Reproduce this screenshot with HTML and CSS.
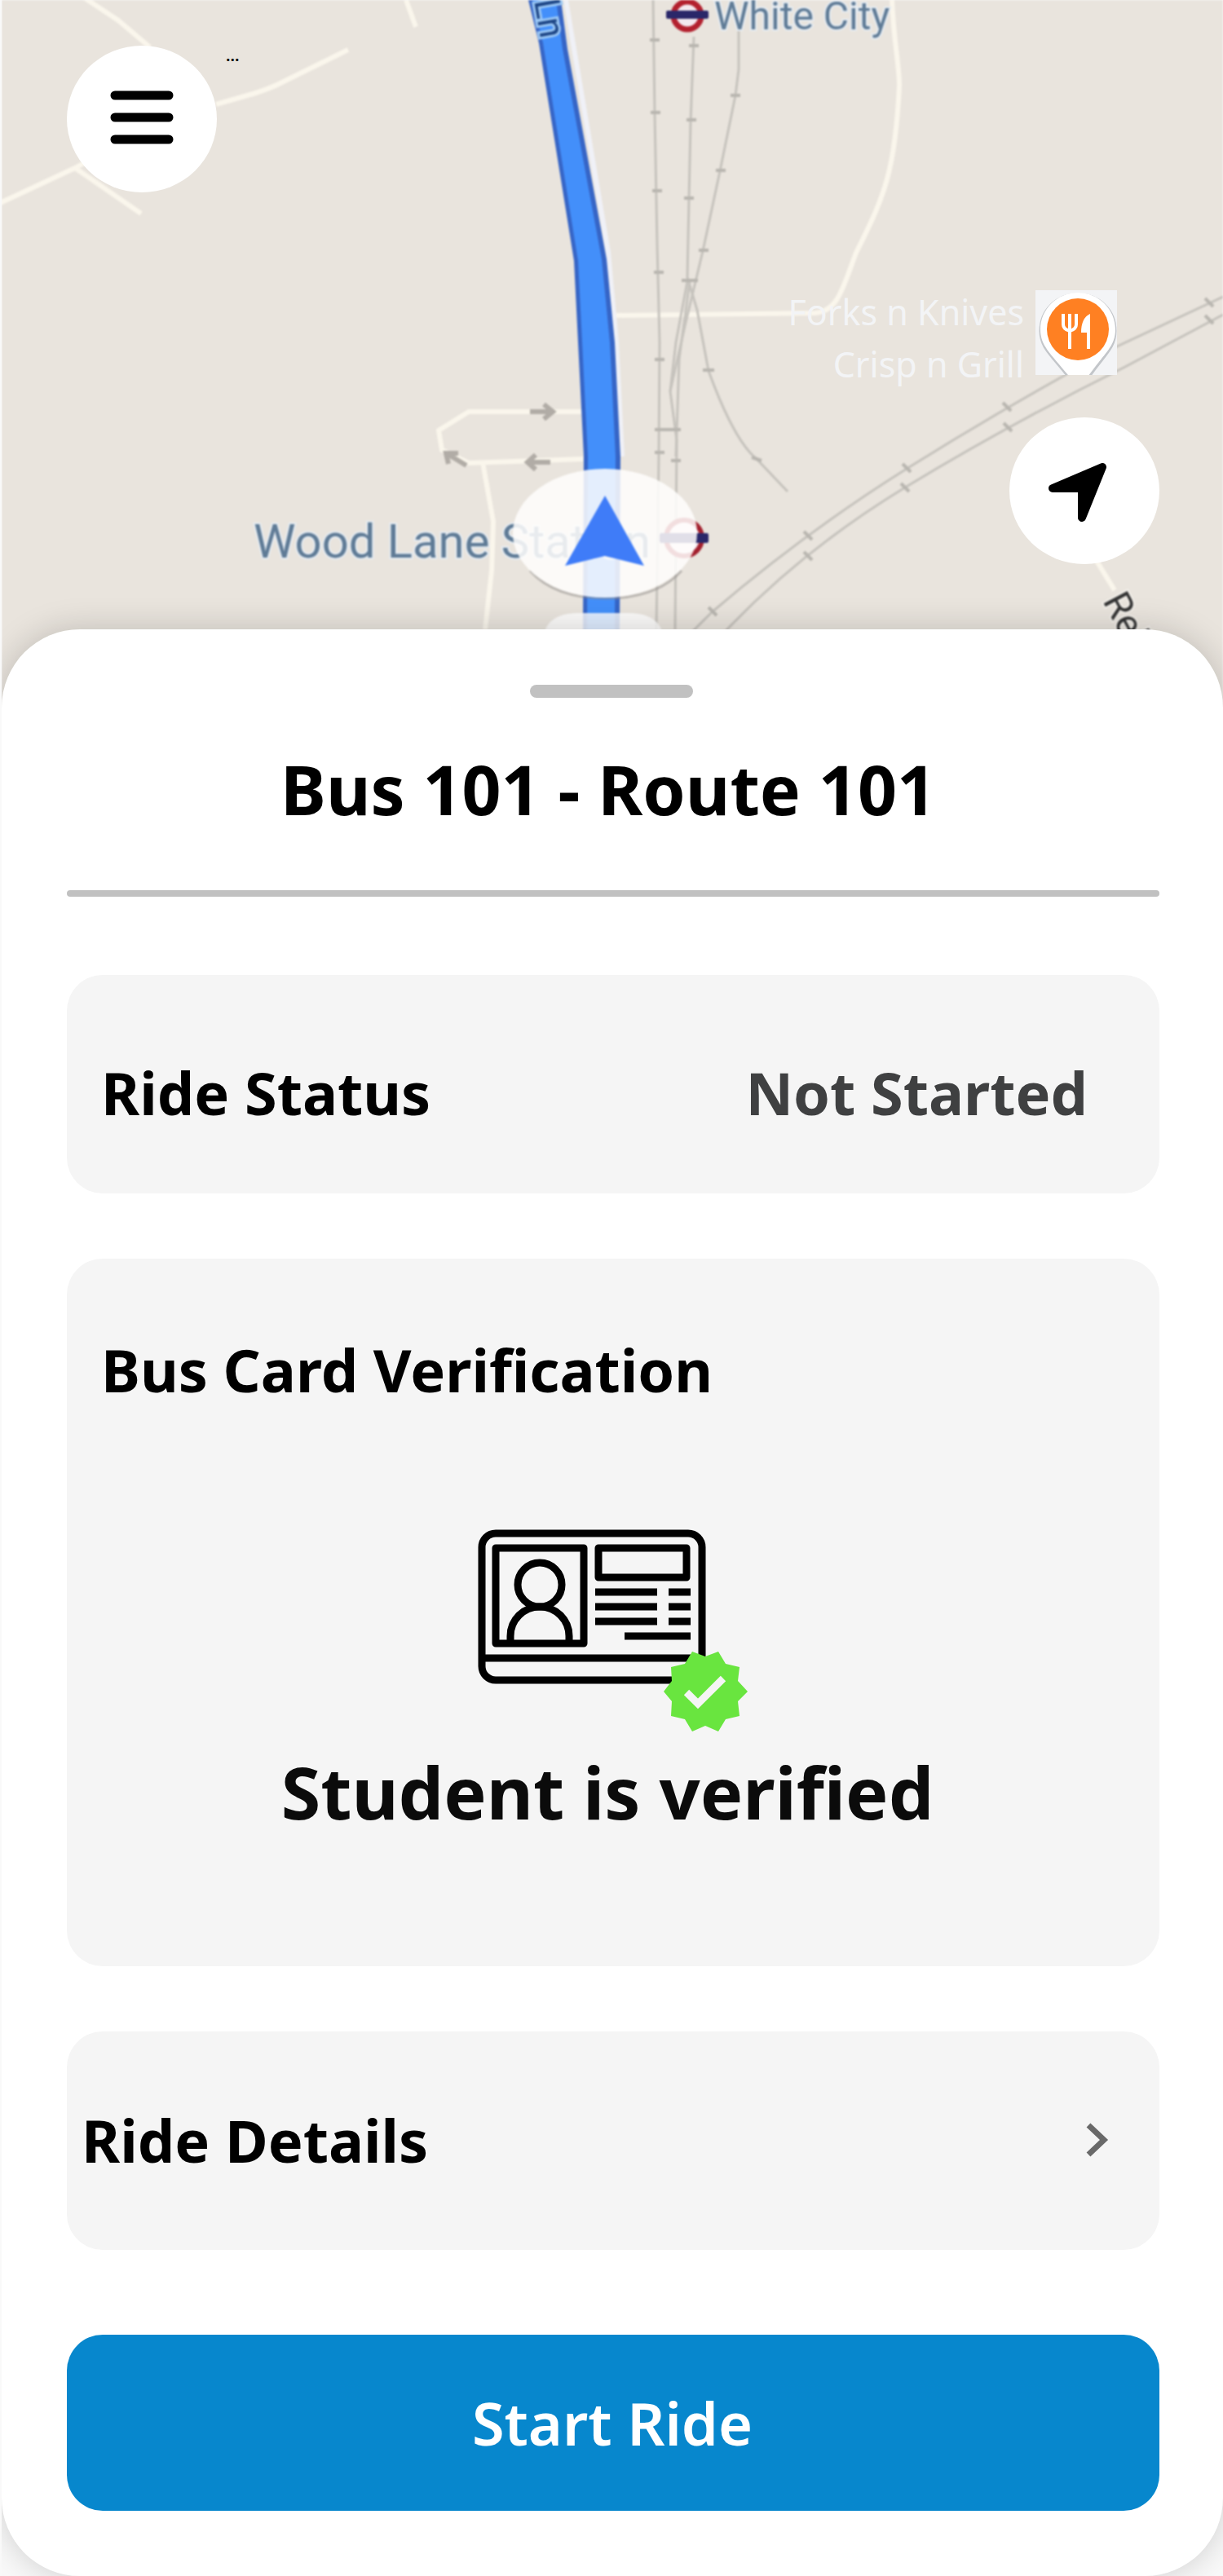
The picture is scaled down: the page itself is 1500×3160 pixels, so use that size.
FILE: index.html
```html
<!DOCTYPE html>
<html lang="en">
<head>
<meta charset="utf-8">
<meta name="viewport" content="width=device-width, initial-scale=1">
<title>Bus 101 - Route 101</title>
<link rel="stylesheet" href="styles.css">
</head>
<body>
<main class="app">
  <section class="map" aria-label="Map">
    <svg class="map-canvas" viewBox="2 0 1498 868" preserveAspectRatio="xMidYMin slice" aria-hidden="true">
      <rect width="1500" height="868" fill="#e9e4dd"/>
      <g fill="none" stroke="#faf6ec" stroke-width="6">
        <path d="M100-5L145 25L184 58M265 128L300 118Q330 110 350 99L427 61M0 249L92 206L110 196M92 206L173 262M498 0L510 33"/>
        <path d="M1094 0C1096 50 1103 80 1103 105C1098 210 1085 240 1050 310C1034 352 1028 382 1000 384L750 387"/>
        <path d="M715 505H575L538 528L542 552L575 568L715 563M592 567L605 640L603 700L595 772M1340 680L1367 724"/>
      </g>
      <g fill="none" stroke="#c6c3bd" stroke-width="3">
        <path d="M801 0L803 140L806 300L809 420L808 560L805 772"/>
        <path d="M851 45L847 150L843 340L855 380L869 455Q900 540 928 563L966 603"/>
        <path d="M906 35V85L902 117L883 210L862 308L840 400L822 480L830 540L828 772"/>
        <path d="M843 345L829 420L822 480M846 345L833 440L829 560"/>
        <path d="M1500 364L1370 425Q1235 498 1112 575T873 751L850 774"/>
        <path d="M1500 386L1380 450Q1235 522 1110 598T890 774"/>
      </g>
      <g fill="none" stroke="#b9b6b0" stroke-width="4">
        <path d="M797 49H809M798 138H810M800 234H812M802 334H814M845 56H857M842 147H854M839 243H851M836 344H856M896 117H908M878 209H890M857 307H869M803 441H815M803 527H835M803 555H815M823 565H835M862 454H876M922 561L934 565M1230 494L1240 504M1231 519L1241 529M1107 569L1117 579M1105 593L1115 603M986 652L996 662M986 677L996 687M869 745L879 755M1478 366L1488 376M1478 387L1488 397"/>
      </g>
      <g fill="none" stroke="#b1aca6" stroke-width="6">
        <path d="M650 505H676M667 496L678 505L667 514M675 567H648M657 558L647 567L657 576M572 571L549 557M562 556H547L550 569"/>
      </g>

      <path d="M694 0L704 60L746 310L756 420L763 560" fill="none" stroke="#f0f1f7" stroke-width="6"/>
      <path d="M648 0L661 53L704 320L709 420L716 560L715 774H760L761 560L754 420L744 318L696 60L688 0Z" fill="#3665c6"/>
      <path d="M653 0L666 53L709 320L714 420L721 560L720 774H754L755 560L748 420L738 318L690 60L682 0Z" fill="#438ffa"/>
      <g class="map-text">
        <text class="road-code" transform="translate(655 1) rotate(80)">Ln</text>
        <text class="station" x="876" y="36">White City</text>
        <text class="station station-lg" x="311" y="684">Wood Lane Station</text>
        <text class="street" transform="translate(1352 737) rotate(62)">Rel</text>
      </g>
      <circle cx="843" cy="19" r="17" fill="#f3e8ee" stroke="#b3202e" stroke-width="7"/>
      <rect x="817" y="13" width="52" height="10" rx="2" fill="#2a2769"/>
      <circle cx="839" cy="660" r="22" fill="#f3e8ee" stroke="#a3202e" stroke-width="6"/>
      <rect x="809" y="654" width="60" height="12" rx="2" fill="#2a2769"/>

      <path d="M650 700Q680 734 743 734T836 700" fill="none" stroke="#8d8a88" stroke-width="3" opacity=".5"/>
      <ellipse cx="742" cy="654" rx="113" ry="79" fill="#fffefd" opacity=".86"/>
      <path d="M742 608L790 694L742 682L693 694Z" fill="#3f7cf8"/>
      <path d="M668 774Q676 752 710 752H770Q804 752 812 774Z" fill="#fff" opacity=".82"/>
    </svg>

    <button class="round-btn menu-btn" type="button" aria-label="Menu">
      <svg width="78" height="66" viewBox="0 0 78 66"><path d="M6 6H72M6 33H72M6 60H72" stroke="#000" stroke-width="11" stroke-linecap="round"/></svg>
    </button>
    <span class="map-more">...</span>

    <div class="place">
      <p class="place-name">Forks n Knives<br>Crisp n Grill</p>
      <svg class="place-pin" width="100" height="104" viewBox="0 0 100 104" aria-hidden="true">
        <rect width="100" height="104" fill="#f3f4f6"/>
        <path d="M52 5C26 5 6 24 6 50C6 70 18 78 40 106H66C86 78 98 70 98 50C98 24 78 5 52 5Z" fill="#fff" stroke="#c3c6ca" stroke-width="3"/>
        <path d="M52 3C26 3 6 24 6 48C6 68 18 77 40 104H64C86 77 98 68 98 48C98 24 78 3 52 3Z" fill="#fff"/>
        <circle cx="52" cy="48" r="38" fill="#ff8022"/>
        <path d="M34 29V42Q34 48 42 50V72M42 29V50M50 29V42Q50 48 42 50" fill="none" stroke="#fff" stroke-width="4"/>
        <path d="M67 29Q56 34 56 52H63V72H67Z" fill="#fff"/>
      </svg>
    </div>

    <button class="round-btn locate-btn" type="button" aria-label="My location">
      <svg width="72" height="72" viewBox="0 0 72 72"><path d="M5 31L66 5L41 67V31Z" fill="#000" stroke="#000" stroke-width="10" stroke-linejoin="round"/></svg>
    </button>
  </section>

  <section class="sheet">
    <div class="handle"></div>
    <h1 class="title">Bus 101 - Route 101</h1>
    <hr class="divider">

    <div class="card row">
      <h2 class="label">Ride Status</h2>
      <p class="label status">Not Started</p>
    </div>

    <div class="card verify">
      <h2 class="label">Bus Card Verification</h2>
      <svg class="id-icon" width="332" height="250" viewBox="0 0 332 250" aria-hidden="true">
        <g fill="none" stroke="#000" stroke-width="9">
          <rect x="5" y="5" width="270" height="180" rx="17"/>
          <path d="M5 158H275"/>
          <g stroke-linejoin="round"><rect x="22" y="23" width="108" height="117"/><rect x="148" y="23" width="108" height="36"/></g>
          <circle cx="76" cy="68" r="27"/>
          <path d="M40 140V131A36 36 0 0 1 112 131V140M144 77H220M234 77H261M144 95H220M234 95H261M144 113H220M234 113H261M180 131H261"/>
        </g>
        <path d="M279 156L295 150L304 165L321 169L319 186L331 199L319 211L321 229L304 233L295 248L279 241L263 248L254 233L237 229L238 211L228 199L238 186L237 169L254 165L263 150Z" fill="#69e53f"/>
        <path d="M256 200L270 214L301 183" fill="none" stroke="#f5f5f5" stroke-width="9"/>
      </svg>
      <p class="verified">Student is verified</p>
    </div>

    <button class="card row details" type="button">
      <span class="label">Ride Details</span>
      <svg width="28" height="42" viewBox="0 0 28 42" aria-hidden="true"><path d="M3 3L22 21L3 39" fill="none" stroke="#696969" stroke-width="7"/></svg>
    </button>

    <button class="start" type="button">Start Ride</button>
  </section>
</main>
</body>
</html>
```
FILE: styles.css
```css
* { box-sizing: border-box; }

body {
  margin: 0;
  background: #f9f9f9;
  color: #000;
  font-family: "Noto Sans", "Open Sans", sans-serif;
}

h1, h2, p { margin: 0; }

button {
  border: 0;
  font: inherit;
  color: inherit;
  cursor: pointer;
}

.app {
  margin-left: 2px;
  overflow: hidden;
}

/* Map */
.map {
  position: relative;
  height: 868px;
}

.map-canvas {
  display: block;
  width: 100%;
  height: 100%;
  filter: blur(1px);
}

.map-text { font-family: Roboto, sans-serif; }

.station {
  font-size: 48px;
  fill: #5f7b96;
  stroke: #e6ecf2;
  stroke-width: 4px;
  paint-order: stroke;
}

.station-lg { font-size: 58px; }

.road-code {
  font-size: 44px;
  fill: #1d4585;
  stroke: #9cc8f5;
  stroke-width: 6px;
  paint-order: stroke;
}

.street {
  font-size: 46px;
  fill: #333;
  stroke: #f4f1ec;
  stroke-width: 4px;
  paint-order: stroke;
}

.round-btn {
  position: absolute;
  display: flex;
  align-items: center;
  justify-content: center;
  width: 184px;
  height: 180px;
  padding: 0;
  border-radius: 50%;
  background: #fff;
}

.menu-btn {
  top: 56px;
  left: 80px;
  padding-bottom: 4px;
}

.locate-btn {
  top: 512px;
  right: 78px;
  padding: 4px 16px 0 0;
}

.map-more {
  position: absolute;
  top: 54px;
  left: 275px;
  font-size: 20px;
  font-weight: 600;
  line-height: 28px;
}

.place {
  position: absolute;
  top: 351px;
  right: 130px;
  display: flex;
  gap: 14px;
  align-items: flex-start;
}

.place-name {
  font-size: 43px;
  line-height: 64px;
  text-align: right;
  color: #f3f4f6;
}

.place-pin {
  display: block;
  margin-top: 5px;
}

/* Bottom sheet */
.sheet {
  position: relative;
  display: flex;
  flex-direction: column;
  margin-top: -96px;
  padding: 68px 78px 80px 80px;
  border-radius: 96px;
  background: #fff;
  box-shadow: 0 0 40px rgba(0, 0, 0, .18);
}

.handle {
  align-self: center;
  width: 200px;
  height: 16px;
  margin-right: 4px;
  border-radius: 8px;
  background: #c1c1c1;
}

.title {
  margin: 52px 0 64px;
  padding-right: 12px;
  font-size: 84px;
  font-weight: 700;
  line-height: 120px;
  text-align: center;
}

.divider {
  width: 100%;
  height: 8px;
  margin: 0 0 96px;
  border: 0;
  border-radius: 4px;
  background: #c1c1c1;
}

.card {
  margin-bottom: 80px;
  border-radius: 44px;
  background: #f5f5f5;
}

.row {
  display: flex;
  align-items: center;
  justify-content: space-between;
  min-height: 268px;
  padding: 20px 88px 0 42px;
}

.label {
  font-size: 72px;
  font-weight: 700;
  line-height: 96px;
}

.status { color: #3f4041; }

.verify {
  display: flex;
  flex-direction: column;
  padding: 88px 42px 154px;
}

.id-icon {
  align-self: center;
  margin-top: 148px;
}

.verified {
  margin-top: 12px;
  padding-right: 14px;
  font-size: 88px;
  font-weight: 700;
  line-height: 120px;
  text-align: center;
  color: #0b0b0b;
}

.details {
  margin-bottom: 104px;
  padding: 0 62px 2px 18px;
  text-align: left;
}

.start {
  min-height: 216px;
  padding: 0 2px 0 0;
  border-radius: 44px;
  background: #0787cd;
  color: #fff;
  font-size: 72px;
  font-weight: 600;
  line-height: 96px;
}
```
